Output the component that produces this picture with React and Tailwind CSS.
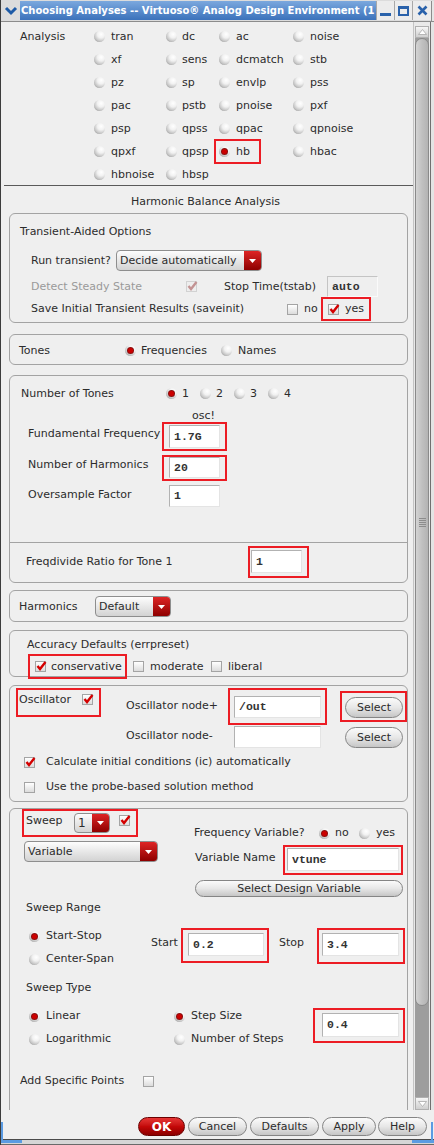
import React from "react";

// small widgets used all over the dialog
function Radio({ on }) {
  return (
    <span className="inline-flex w-[11px] h-[11px] shrink-0 items-center justify-center rounded-full bg-[radial-gradient(circle_at_65%_30%,#ffffff_0%,#f1f1f1_35%,#c6c6c6_66%,#7c7c7c_100%)]">
      {on && <span className="w-[5px] h-[5px] rounded-full bg-[#cc0000] shadow-[0_0_0_1px_#8a1010]" />}
    </span>
  );
}

function Check({ on, dim }) {
  return (
    <span
      className={`relative inline-block w-[11px] h-[11px] shrink-0 border ${
        dim ? "border-[#d2d2d2] bg-[#eeeeee]" : "border-[#a4a4a4] bg-gradient-to-b from-white to-[#dcdcdc]"
      }`}
    >
      {on && (
        <svg className="absolute left-[-1px] top-[-2px] overflow-visible" width="12" height="12" viewBox="0 0 12 12">
          <path d="M2.5 6 L5 9 L10.5 2" fill="none" stroke={dim ? "#c39393" : "#d40000"} strokeWidth="2.4" />
        </svg>
      )}
    </span>
  );
}

function Drop({ className = "", children }) {
  return (
    <div className={`flex shrink-0 overflow-hidden rounded-[4px] border border-[#8e8e8e] bg-gradient-to-b from-[#fdfdfd] to-[#d3d3d3] ${className}`}>
      <span className="flex-1 flex items-center pl-[3px] whitespace-nowrap overflow-hidden">{children}</span>
      <span className="w-[17px] flex items-center justify-center bg-gradient-to-b from-[#de2424] to-[#8e0000]">
        <svg width="7" height="4" viewBox="0 0 7 4">
          <path d="M0 0H7L3.5 4Z" fill="#fff" />
        </svg>
      </span>
    </div>
  );
}

function Pill({ className = "", children }) {
  return (
    <div className={`flex shrink-0 items-center justify-center rounded-full border border-[#858585] bg-gradient-to-b from-[#fbfbfb] via-[#e7e7e7] to-[#c6c6c6] whitespace-nowrap ${className}`}>
      {children}
    </div>
  );
}

function OkButton() {
  return (
    <div className="flex shrink-0 items-center justify-center w-[47px] h-[19px] rounded-full border border-[#6a0000] bg-gradient-to-b from-[#e63434] via-[#c40808] to-[#8c0000] text-white font-bold text-[12px]">
      OK
    </div>
  );
}

function Field({ className = "", dim, children }) {
  return (
    <div
      className={`flex shrink-0 items-center pl-[4px] border font-['Liberation_Mono',monospace] font-bold text-[11.5px] text-[#333] ${
        dim
          ? "bg-[#efefef] border-[#c4c4c4] border-b-[#fafafa] border-r-[#fafafa]"
          : "bg-white border-[#b2b2b2] border-b-[#e4e4e4] border-r-[#e4e4e4]"
      } ${className}`}
    >
      {children}
    </div>
  );
}

function Group({ className = "", children }) {
  return <div className={`ml-[8px] w-[399px] border border-[#a3a3a3] rounded-[6px] ${className}`}>{children}</div>;
}

const analyses = [
  ["tran", "dc", "ac", "noise"],
  ["xf", "sens", "dcmatch", "stb"],
  ["pz", "sp", "envlp", "pss"],
  ["pac", "pstb", "pnoise", "pxf"],
  ["psp", "qpss", "qpac", "qpnoise"],
  ["qpxf", "qpsp", "hb", "hbac"],
  ["hbnoise", "hbsp"],
];
const colW = ["w-[72px]", "w-[53px]", "w-[74px]", "w-[80px]"];

export default function App() {
  return (
    <div className="relative w-[434px] h-[1145px] flex flex-col overflow-hidden bg-[#efefef] border-l border-[#3c3c3c] text-[11px] leading-[14px] text-[#2c2c2c] font-['DejaVu_Sans',sans-serif]">
      {/* title bar */}
      <div className="h-[22px] flex bg-[#dcdcdc] border-b border-[#8c8c8c] pt-[1px]">
        <div className="w-[19px] h-[19px] flex items-center justify-center">
          <svg width="14" height="10" viewBox="0 0 14 10">
            <path d="M2 2 L7 7 L12 2" fill="none" stroke="#1d5aa6" strokeWidth="3" />
          </svg>
        </div>
        <div className="w-[356px] h-[19px] pl-[1px] bg-gradient-to-b from-[#7ba8de] to-[#3b72bb] text-white font-bold text-[10px] leading-[19px] whitespace-nowrap overflow-hidden">
          Choosing Analyses -- Virtuoso® Analog Design Environment (1
        </div>
        <div className="w-[18px] h-[19px] flex items-end justify-center pb-[4px] bg-[#ececec] border-l border-[#a8a8a8]">
          <span className="w-[11px] h-[3px] bg-[#2a62ab]" />
        </div>
        <div className="w-[18px] h-[19px] flex items-center justify-center bg-[#ececec] border-l border-[#a8a8a8]">
          <span className="w-[11px] h-[10px] border-2 border-t-[3px] border-[#2a62ab]" />
        </div>
        <div className="w-[19px] h-[19px] flex items-center justify-center bg-[#ececec] border-l border-[#a8a8a8]">
          <svg width="11" height="11" viewBox="0 0 11 11">
            <path d="M1.5 1.5 L9.5 9.5 M9.5 1.5 L1.5 9.5" stroke="#2a62ab" strokeWidth="2.6" />
          </svg>
        </div>
        <div className="w-[3px] bg-[#e6e6e6] border-l border-[#8c8c8c]" />
      </div>

      {/* main */}
      <div className="h-[1088px] flex">
        <div className="w-[412px] h-full overflow-hidden">
          {/* analysis radios */}
          <div className="mt-[3px]">
            {analyses.map((row, r) => (
              <div key={r} className="flex items-center h-[23px]">
                <div className="w-[93px] pl-[19px]">{r === 0 ? "Analysis" : ""}</div>
                {row.map((name, c) =>
                  name === "hb" ? (
                    <div key={c} className={`${colW[c]} flex`}>
                      <div className="-ml-[5px] w-[47px] h-[25px] flex items-center pl-[3px] border-2 border-[#ec1c24]">
                        <Radio on />
                        <span className="ml-[6px]">hb</span>
                      </div>
                    </div>
                  ) : (
                    <div key={c} className={`${colW[c]} flex items-center`}>
                      <Radio />
                      <span className={c === 1 ? "ml-[5px]" : "ml-[6px]"}>{name}</span>
                    </div>
                  )
                )}
              </div>
            ))}
          </div>
          <div className="-mt-[1px] ml-[3px] w-[409px] h-px bg-[#5a5a5a]" />
          <div className="mt-[9px] w-[409px] text-center">Harmonic Balance Analysis</div>

          {/* transient-aided options */}
          <Group className="mt-[4px] h-[110px]">
            <div className="pt-[11px] pl-[10px]">Transient-Aided Options</div>
            <div className="mt-[11px] h-[21px] flex items-center pl-[21px]">
              <span className="w-[85px]">Run transient?</span>
              <Drop className="w-[146px] h-[21px]">Decide automatically</Drop>
            </div>
            <div className="mt-[5px] h-[21px] flex items-center pl-[21px]">
              <span className="w-[155px] text-[#9a9a9a]">Detect Steady State</span>
              <Check on dim />
              <span className="ml-[27px] w-[103px]">Stop Time(tstab)</span>
              <Field dim className="w-[51px] h-[21px]">auto</Field>
            </div>
            <div className="h-[24px] flex items-center pl-[21px]">
              <span className="w-[256px]">Save Initial Transient Results (saveinit)</span>
              <Check />
              <span className="ml-[6px] w-[17px]">no</span>
              <div className="w-[50px] h-[24px] flex items-center pl-[5px] border-2 border-[#ec1c24]">
                <Check on />
                <span className="ml-[6px]">yes</span>
              </div>
            </div>
          </Group>

          {/* tones */}
          <Group className="mt-[11px] h-[31px] flex items-center pl-[9px] pt-[2px]">
            <span className="w-[106px]">Tones</span>
            <Radio on />
            <span className="ml-[5px] w-[80px]">Frequencies</span>
            <Radio />
            <span className="ml-[6px]">Names</span>
          </Group>

          {/* number of tones */}
          <Group className="mt-[10px] h-[208px]">
            <div className="h-[166px] pt-[10px]">
              <div className="h-[15px] flex items-center pl-[11px]">
                <span className="w-[145px]">Number of Tones</span>
                {["1", "2", "3", "4"].map((n) => (
                  <span key={n} className="flex items-center">
                    <Radio on={n === "1"} />
                    <span className="ml-[5px] w-[18px]">{n}</span>
                  </span>
                ))}
              </div>
              <div className="mt-[9px] h-[12px] ml-[182px] leading-[12px]">osc!</div>
              <div className="h-[29px] flex items-start">
                <span className="mt-[5px] ml-[18px] w-[134px] whitespace-nowrap overflow-hidden">Fundamental Frequency</span>
                <div className="w-[65px] h-[29px] pl-[5px] pt-[1px] border-2 border-[#ec1c24]">
                  <Field className="w-[51px] h-[23px]">1.7G</Field>
                </div>
              </div>
              <div className="mt-[4px] h-[26px] flex items-start">
                <span className="mt-[3px] ml-[18px] w-[134px]">Number of Harmonics</span>
                <div className="w-[65px] h-[26px] pl-[5px] border-2 border-[#ec1c24]">
                  <Field className="w-[51px] h-[21px]">20</Field>
                </div>
              </div>
              <div className="mt-[4px] h-[22px] flex items-start">
                <span className="mt-[3px] ml-[18px] w-[134px]">Oversample Factor</span>
                <Field className="ml-[7px] w-[51px] h-[22px]">1</Field>
              </div>
            </div>
            <div className="h-[40px] border-t border-[#a3a3a3] pt-[3px]">
              <div className="h-[32px] flex items-center">
                <span className="pl-[16px] w-[238px]">Freqdivide Ratio for Tone 1</span>
                <div className="w-[61px] h-[32px] pl-[1px] pt-[2px] border-2 border-[#ec1c24]">
                  <Field className="w-[51px] h-[23px]">1</Field>
                </div>
              </div>
            </div>
          </Group>

          {/* harmonics */}
          <Group className="mt-[7px] h-[32px] flex items-center pl-[9px] pt-[1px]">
            <span className="w-[76px]">Harmonics</span>
            <Drop className="w-[76px] h-[21px]">Default</Drop>
          </Group>

          {/* accuracy */}
          <Group className="mt-[8px] h-[47px]">
            <div className="pt-[7px] pl-[17px]">Accuracy Defaults (errpreset)</div>
            <div className="mt-[2px] h-[25px] flex items-center">
              <div className="ml-[18px] w-[99px] h-[25px] flex items-center pl-[5px] border-2 border-[#ec1c24]">
                <Check on />
                <span className="ml-[5px]">conservative</span>
              </div>
              <span className="ml-[6px] flex">
                <Check />
              </span>
              <span className="ml-[6px] w-[61px]">moderate</span>
              <Check />
              <span className="ml-[6px]">liberal</span>
            </div>
          </Group>

          {/* oscillator */}
          <Group className="mt-[8px] h-[117px]">
            <div className="h-[39px] flex items-start">
              <div className="mt-[2px] ml-[6px] w-[85px] h-[29px] flex items-center pl-[1px] pb-[6px] border-2 border-[#ec1c24]">
                <span className="w-[63px]">Oscillator</span>
                <Check on />
              </div>
              <span className="mt-[13px] ml-[25px] w-[102px]">Oscillator node+</span>
              <div className="mt-[2px] w-[99px] h-[37px] pl-[4px] pt-[6px] border-2 border-[#ec1c24]">
                <Field className="w-[87px] h-[22px]">/out</Field>
              </div>
              <div className="mt-[5px] ml-[13px] w-[67px] h-[31px] pl-[3px] pt-[4px] border-2 border-[#ec1c24]">
                <Pill className="w-[58px] h-[21px]">Select</Pill>
              </div>
            </div>
            <div className="h-[23px] flex items-start">
              <span className="mt-[4px] ml-[116px] w-[108px]">Oscillator node-</span>
              <Field className="mt-[1px] w-[87px] h-[22px]"></Field>
              <Pill className="mt-[2px] ml-[24px] w-[58px] h-[21px]">Select</Pill>
            </div>
            <div className="mt-[7px] h-[14px] flex items-center pl-[14px]">
              <Check on />
              <span className="ml-[11px]">Calculate initial conditions (ic) automatically</span>
            </div>
            <div className="mt-[11px] h-[14px] flex items-center pl-[14px]">
              <Check />
              <span className="ml-[11px]">Use the probe-based solution method</span>
            </div>
          </Group>

          {/* sweep */}
          <Group className="mt-[6px] h-[330px]">
            <div className="flex items-start">
              <div className="w-[184px] pl-[12px]">
                <div className="w-[116px] h-[28px] flex items-start pl-[2px] border-2 border-[#ec1c24]">
                  <span className="mt-[3px] w-[48px]">Sweep</span>
                  <Drop className="mt-[2px] w-[36px] h-[20px] text-[12px]">1</Drop>
                  <span className="mt-[4px] ml-[9px] flex">
                    <Check on />
                  </span>
                </div>
                <Drop className="mt-[4px] ml-[2px] w-[134px] h-[21px]">Variable</Drop>
              </div>
              <div className="w-[210px]">
                <div className="mt-[17px] h-[14px] flex items-center">
                  <span className="w-[125px]">Frequency Variable?</span>
                  <Radio on />
                  <span className="ml-[5px] w-[24px]">no</span>
                  <Radio />
                  <span className="ml-[6px]">yes</span>
                </div>
                <div className="mt-[5px] flex items-start">
                  <span className="mt-[6px] ml-[1px] w-[88px]">Variable Name</span>
                  <div className="w-[120px] h-[30px] pl-[2px] pt-[1px] border-2 border-[#ec1c24]">
                    <Field className="w-[112px] h-[23px]">vtune</Field>
                  </div>
                </div>
                <Pill className="mt-[5px] ml-[1px] w-[208px] h-[17px]">Select Design Variable</Pill>
              </div>
            </div>

            <div className="mt-[4px] pl-[16px]">Sweep Range</div>
            <div className="mt-[13px] flex items-start">
              <div className="w-[141px] pl-[19px] pt-[1px]">
                <div className="h-[14px] flex items-center">
                  <Radio on />
                  <span className="ml-[6px]">Start-Stop</span>
                </div>
                <div className="mt-[9px] h-[14px] flex items-center">
                  <Radio />
                  <span className="ml-[6px]">Center-Span</span>
                </div>
              </div>
              <span className="mt-[8px] w-[30px]">Start</span>
              <div className="w-[88px] h-[35px] pl-[5px] pt-[3px] border-2 border-[#ec1c24]">
                <Field className="w-[76px] h-[23px]">0.2</Field>
              </div>
              <span className="mt-[8px] ml-[10px] w-[38px]">Stop</span>
              <div className="w-[88px] h-[36px] pl-[3px] pt-[3px] border-2 border-[#ec1c24]">
                <Field className="w-[77px] h-[23px]">3.4</Field>
              </div>
            </div>

            <div className="mt-[15px] pl-[16px]">Sweep Type</div>
            <div className="mt-[13px] flex items-start">
              <div className="w-[164px] pl-[19px] pt-[1px]">
                <div className="h-[14px] flex items-center">
                  <Radio on />
                  <span className="ml-[6px]">Linear</span>
                </div>
                <div className="mt-[9px] h-[14px] flex items-center">
                  <Radio />
                  <span className="ml-[6px]">Logarithmic</span>
                </div>
              </div>
              <div className="w-[139px] pt-[1px]">
                <div className="h-[14px] flex items-center">
                  <Radio on />
                  <span className="ml-[6px]">Step Size</span>
                </div>
                <div className="mt-[9px] h-[14px] flex items-center">
                  <Radio />
                  <span className="ml-[6px]">Number of Steps</span>
                </div>
              </div>
              <div className="w-[92px] h-[35px] pl-[7px] pt-[3px] border-2 border-[#ec1c24]">
                <Field className="w-[77px] h-[24px]">0.4</Field>
              </div>
            </div>

            <div className="mt-[28px] h-[14px] flex items-center pl-[10px]">
              <span className="w-[123px]">Add Specific Points</span>
              <Check />
            </div>
          </Group>
        </div>

        {/* scrollbar */}
        <div className="w-[17px] h-full flex flex-col pt-[4px] px-[1px] bg-[#e9e9e9] border-l border-[#c4c4c4]">
          <div className="h-[12px] flex items-center justify-center border border-[#b0b0b0] bg-gradient-to-b from-[#f6f6f6] to-[#cfcfcf]">
            <svg width="9" height="6" viewBox="0 0 9 6">
              <path d="M0.5 5.5 L4.5 0.5 L8.5 5.5Z" fill="#ffffff" stroke="#a8a8a8" strokeWidth="0.8" />
            </svg>
          </div>
          <div className="flex-1 bg-[#9d9d9d]">
            <div className="h-[968px] flex items-center justify-center rounded-[7px] border border-[#8a8a8a] bg-gradient-to-r from-[#d4d4d4] via-[#c0c0c0] to-[#b3b3b3]">
              <div className="flex flex-col gap-[1px]">
                {[0, 1, 2, 3, 4].map((i) => (
                  <span key={i} className="w-[7px] h-px bg-[#8c8c8c]" />
                ))}
              </div>
            </div>
          </div>
          <div className="h-[13px] flex items-center justify-center border border-[#b0b0b0] bg-gradient-to-b from-[#f6f6f6] to-[#cfcfcf]">
            <svg width="9" height="6" viewBox="0 0 9 6">
              <path d="M0.5 0.5 L4.5 5.5 L8.5 0.5Z" fill="#ffffff" stroke="#a8a8a8" strokeWidth="0.8" />
            </svg>
          </div>
        </div>
        <div className="w-[4px] h-full bg-[#e4e4e4] border-l border-[#707070]" />
      </div>

      {/* button bar */}
      <div className="h-[29px] flex items-start pt-[7px] pl-[137px]">
        <OkButton />
        <Pill className="ml-[3px] w-[59px] h-[19px]">Cancel</Pill>
        <Pill className="ml-[3px] w-[69px] h-[19px]">Defaults</Pill>
        <Pill className="ml-[3px] w-[54px] h-[19px]">Apply</Pill>
        <Pill className="ml-[2px] w-[49px] h-[19px]">Help</Pill>
      </div>

      {/* window bottom edge */}
      <div className="h-[6px] flex border-t border-[#4a4a4a] border-b border-b-[#6a6a6a] bg-[#d6d6d6]">
        <div className="w-[21px] h-[3px] bg-[#5b9be2]" />
        <div className="flex-1" />
        <div className="w-[22px] h-[3px] bg-[#5b9be2]" />
      </div>
      <div className="absolute left-0 bottom-[5px] w-[2px] h-[18px] bg-[#5b9be2]" />
      <div className="absolute right-[1px] bottom-[5px] w-[2px] h-[18px] bg-[#5b9be2]" />
    </div>
  );
}
